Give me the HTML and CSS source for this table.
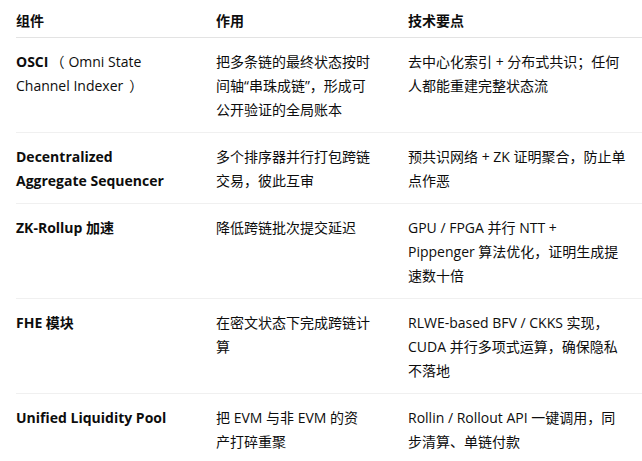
FILE: index.html
```html
<!DOCTYPE html>
<html lang="zh-CN">
<head>
<meta charset="utf-8">
<link rel="stylesheet" href="styles.css">
</head>
<body>
<table class="spec">
  <colgroup>
    <col class="c1"><col class="c2"><col class="c3">
  </colgroup>
  <thead>
    <tr><th>组件</th><th>作用</th><th>技术要点</th></tr>
  </thead>
  <tbody>
    <tr>
      <td><strong>OSCI</strong><span class="po">（</span>Omni State Channel Indexer<span class="pc">）</span></td>
      <td>把多条链的最终状态按时间轴“串珠成链”，形成可公开验证的全局账本</td>
      <td>去中心化索引 + 分布式共识；任何人都能重建完整状态流</td>
    </tr>
    <tr>
      <td><strong>Decentralized Aggregate Sequencer</strong></td>
      <td>多个排序器并行打包跨链交易，彼此互审</td>
      <td>预共识网络 + ZK 证明聚合，防止单点作恶</td>
    </tr>
    <tr>
      <td><strong>ZK-Rollup 加速</strong></td>
      <td>降低跨链批次提交延迟</td>
      <td>GPU / FPGA 并行 NTT + Pippenger 算法优化，证明生成提速数十倍</td>
    </tr>
    <tr>
      <td><strong>FHE 模块</strong></td>
      <td>在密文状态下完成跨链计算</td>
      <td>RLWE-based BFV / CKKS 实现，CUDA 并行多项式运算，确保隐私不落地</td>
    </tr>
    <tr>
      <td><strong>Unified Liquidity Pool</strong></td>
      <td>把 EVM 与非 EVM 的资产打碎重聚</td>
      <td>Rollin / Rollout API 一键调用，同步清算、单链付款</td>
    </tr>
  </tbody>
</table>
</body>
</html>
```

FILE: styles.css
```css
html, body {
  margin: 0;
  padding: 0;
  background: #ffffff;
}
body {
  font-family: "Segoe UI", "Open Sans", "Noto Sans CJK SC", sans-serif;
  font-size: 14px;
  line-height: 24px;
  color: #0d0d0d;
}
.spec {
  margin-left: 16px;
  width: 626px;
  border-collapse: collapse;
  table-layout: fixed;
}
.c1 { width: 184px; }
.c2 { width: 192px; }
.c3 { width: 250px; }
.spec th {
  text-align: left;
  font-weight: 700;
  padding: 9px 16px 4px 16px;
  border-bottom: 1px solid #e3e3e3;
}
.spec td {
  vertical-align: top;
  padding: 12px 16px 10px 16px;
  border-bottom: 1px solid #f0f0f0;
}
.spec td:nth-child(2) {
  padding-right: 21px;
}
.spec th:first-child,
.spec td:first-child {
  padding-left: 0;
}
.spec strong {
  font-weight: 700;
}
.po {
  margin-left: 2px;
  margin-right: 4px;
}
.pc {
  margin-left: 6px;
}
```
